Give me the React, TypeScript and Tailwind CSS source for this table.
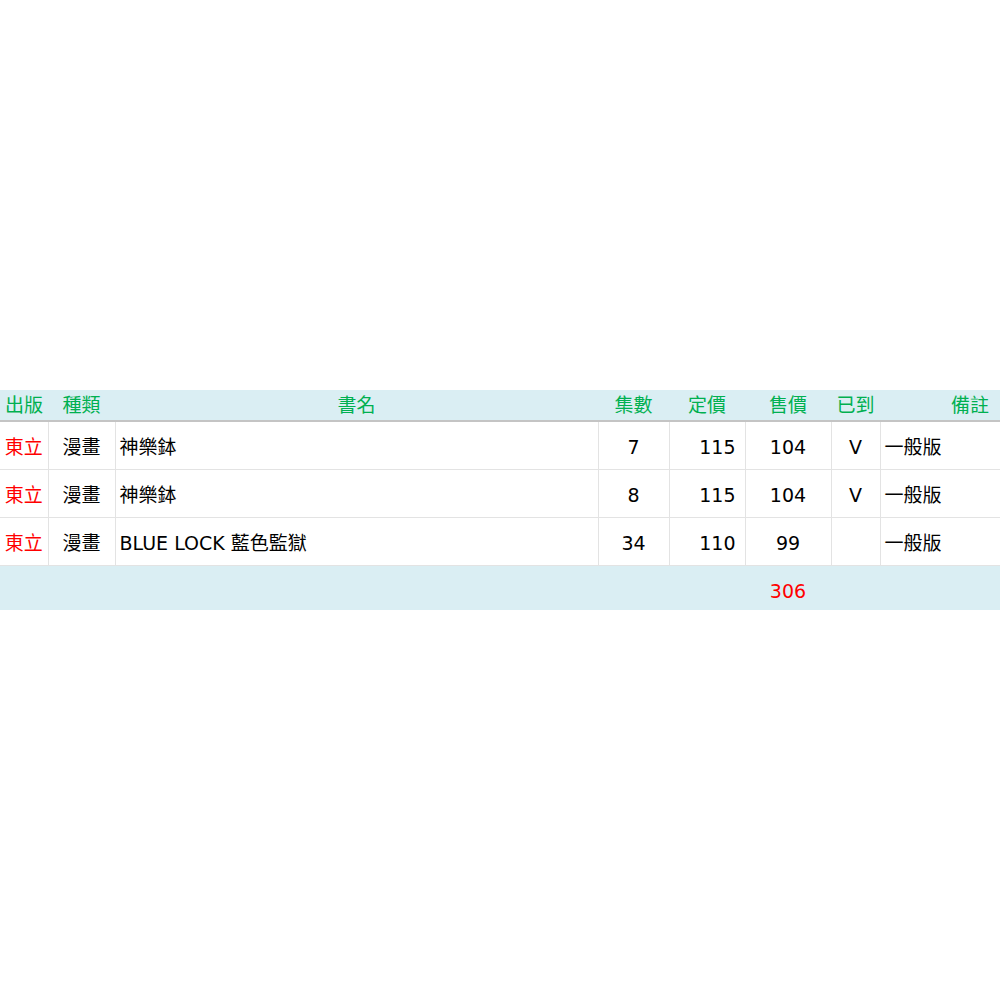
const rows = [
  { pub: '東立', kind: '漫畫', title: '神樂鉢', vol: '7', list: '115', sale: '104', got: 'V', note: '一般版' },
  { pub: '東立', kind: '漫畫', title: '神樂鉢', vol: '8', list: '115', sale: '104', got: 'V', note: '一般版' },
  { pub: '東立', kind: '漫畫', title: 'BLUE LOCK 藍色監獄', vol: '34', list: '110', sale: '99', got: '', note: '一般版' },
];

const cell = 'border border-[#e3e3e3] h-[48px] pt-[4px] pb-0';

export default function App() {
  return (
    <div
      className="min-h-screen flex items-center bg-white text-[19px] leading-none"
      style={{ fontFamily: '"DejaVu Sans", "Noto Sans CJK TC", sans-serif' }}
    >
      <table className="w-full table-fixed border-collapse">
        <colgroup>
          <col className="w-[48px]" />
          <col className="w-[67px]" />
          <col />
          <col className="w-[71px]" />
          <col className="w-[76px]" />
          <col className="w-[86px]" />
          <col className="w-[49px]" />
          <col className="w-[120px]" />
        </colgroup>
        <thead>
          <tr className="bg-[#daeef3] text-[#00b050] h-[31px] border-b-2 border-[#c4c4c4]">
            <th className="font-normal text-center">出版</th>
            <th className="font-normal text-center">種類</th>
            <th className="font-normal text-center">書名</th>
            <th className="font-normal text-center">集數</th>
            <th className="font-normal text-center">定價</th>
            <th className="font-normal text-center">售價</th>
            <th className="font-normal text-center">已到</th>
            <th className="font-normal text-right pr-[11px]">備註</th>
          </tr>
        </thead>
        <tbody className="text-black">
          {rows.map((r, i) => (
            <tr key={i}>
              <td className={`${cell} border-l-0 text-center text-[#ff0000]`}>{r.pub}</td>
              <td className={`${cell} text-center`}>{r.kind}</td>
              <td className={`${cell} text-left pl-[4px]`}>{r.title}</td>
              <td className={`${cell} text-center`}>{r.vol}</td>
              <td className={`${cell} text-right pr-[9px]`}>{r.list}</td>
              <td className={`${cell} text-center`}>{r.sale}</td>
              <td className={`${cell} text-center`}>{r.got}</td>
              <td className={`${cell} border-r-0 text-left pl-[4px]`}>{r.note}</td>
            </tr>
          ))}
          <tr className="bg-[#daeef3] h-[45px]">
            <td colSpan={5}></td>
            <td className="text-center text-[#ff0000] pt-[8px]">306</td>
            <td colSpan={2}></td>
          </tr>
        </tbody>
      </table>
    </div>
  );
}
